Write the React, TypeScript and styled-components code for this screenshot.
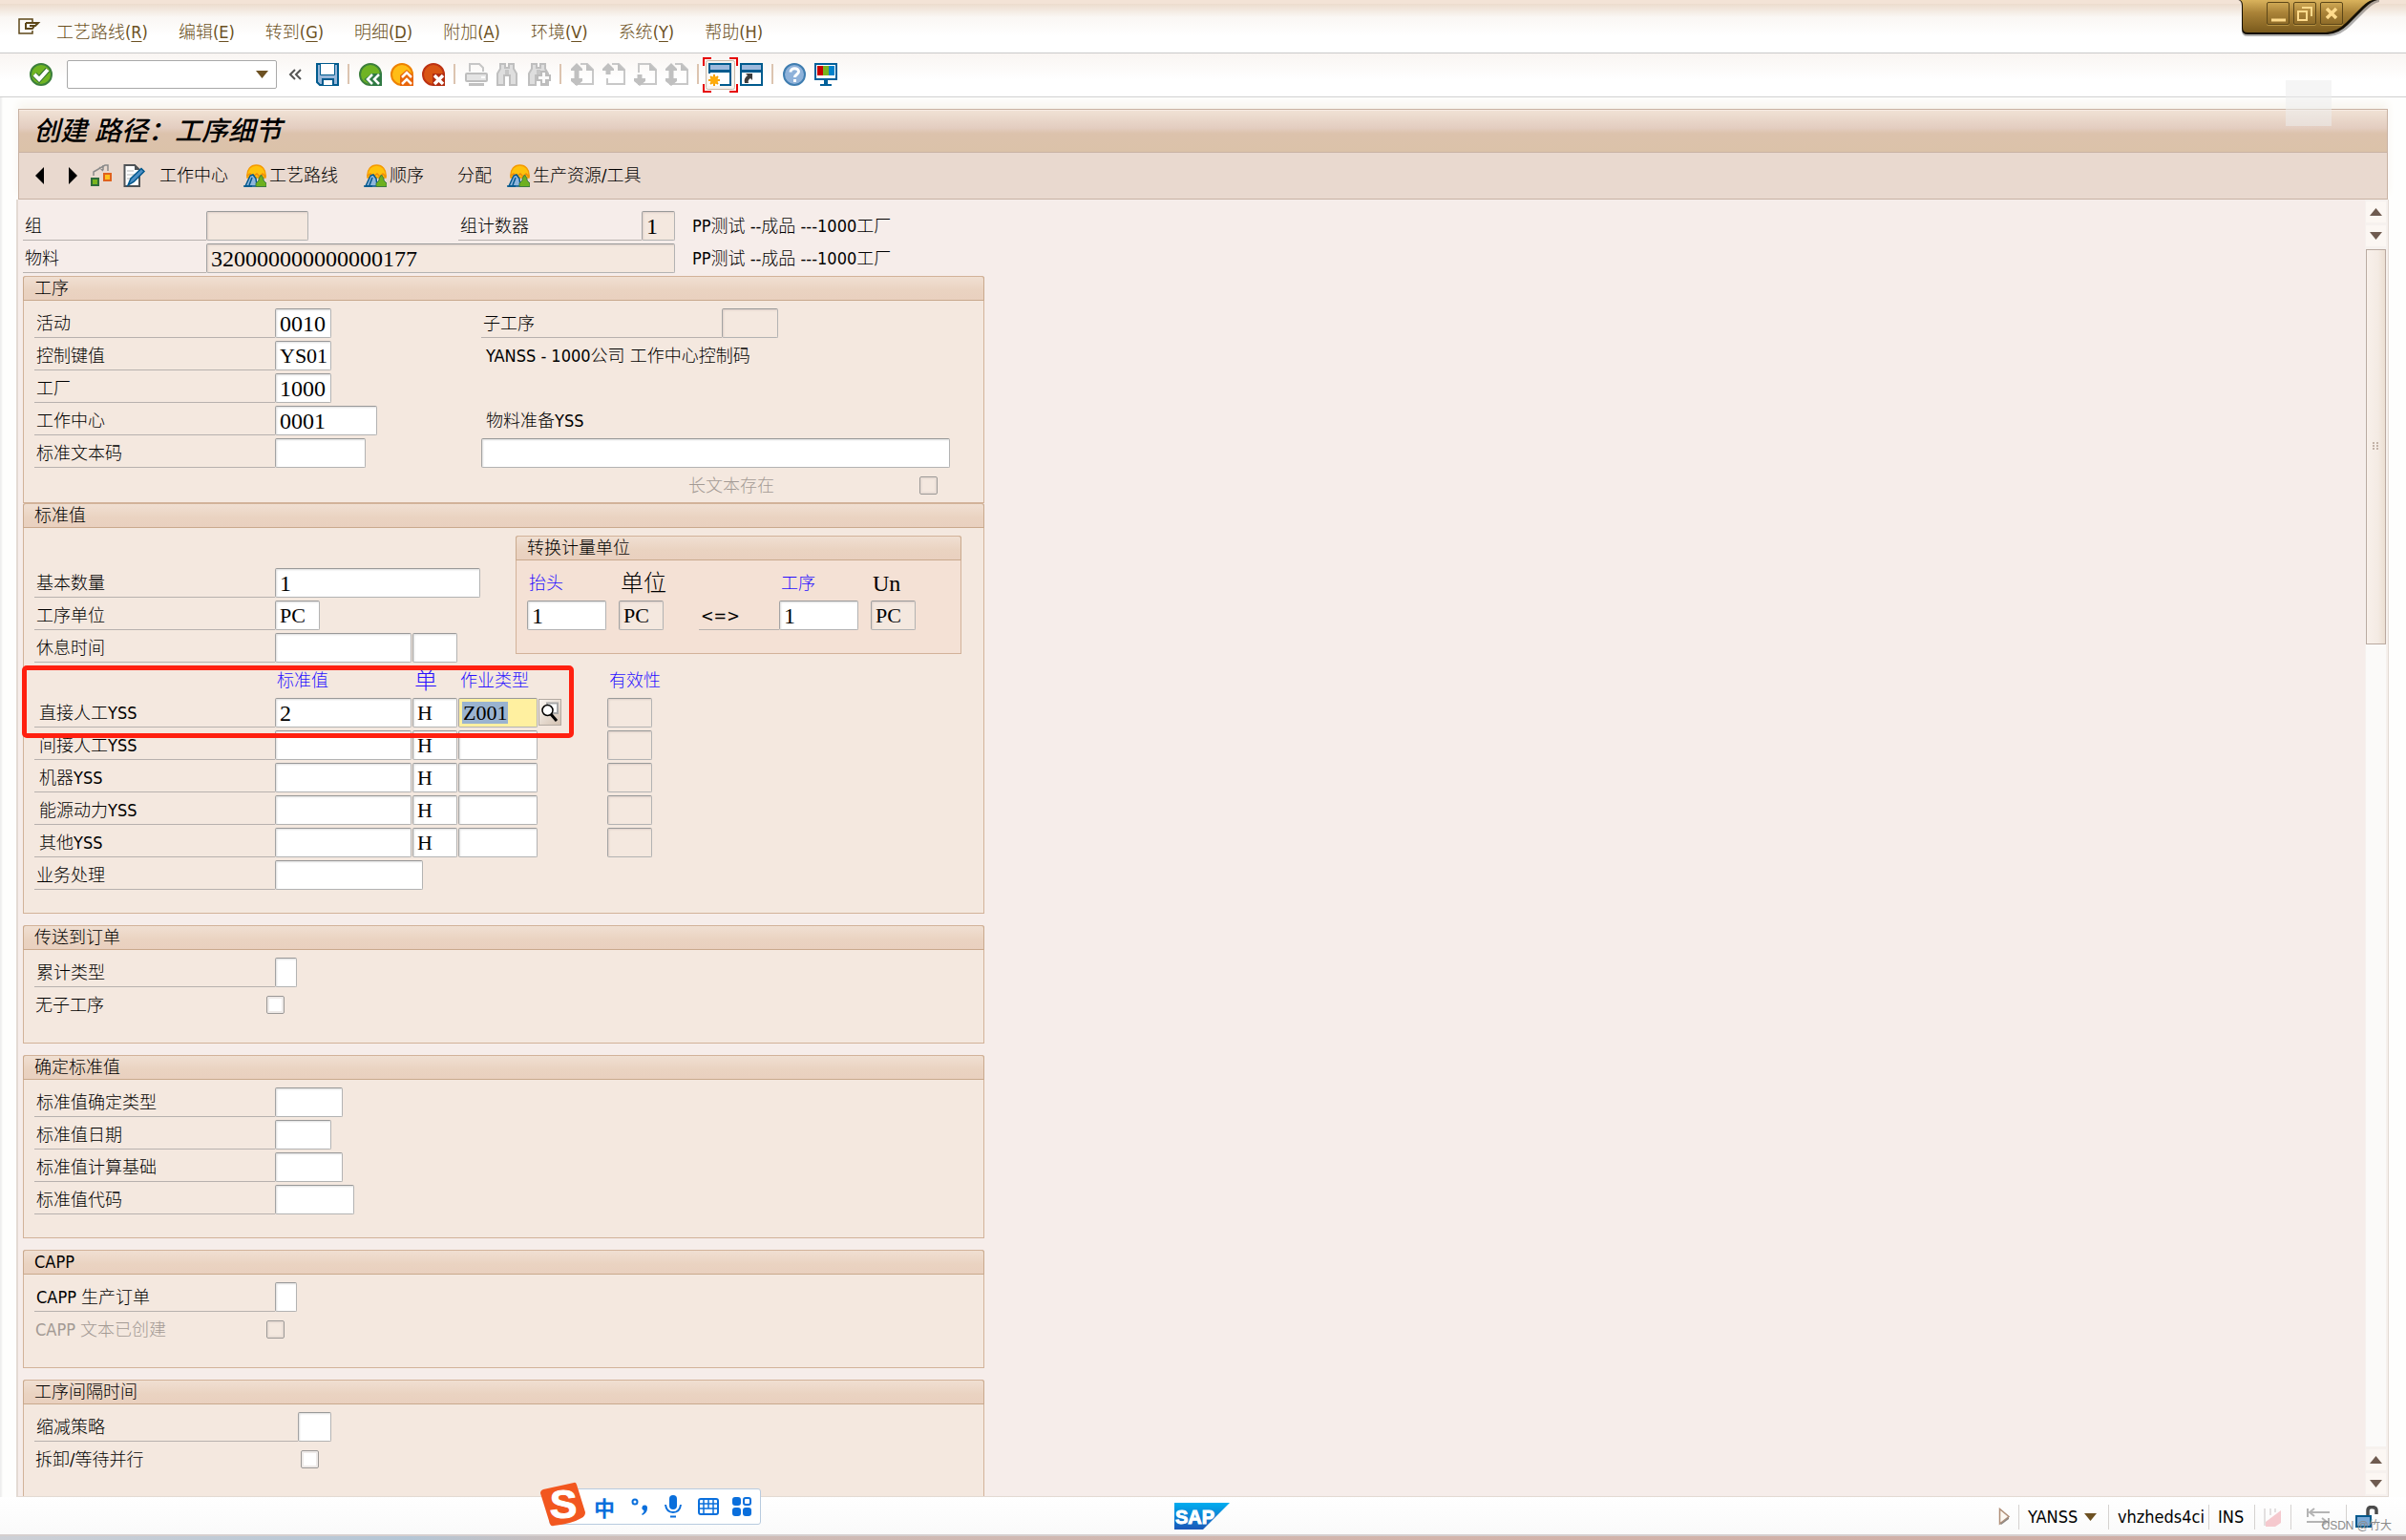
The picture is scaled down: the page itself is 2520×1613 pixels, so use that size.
import React from 'react';
import styled, { createGlobalStyle, css } from 'styled-components';

const UI = `"DejaVu Sans Condensed", "DejaVu Sans", "Noto Sans CJK SC", sans-serif`;
const MONO = `"Liberation Serif", "Noto Sans CJK SC", serif`;
const CELL = 12;
const LINE = 34;

const GlobalStyle = createGlobalStyle`
  *, *::before, *::after { box-sizing: border-box; }
  body { margin: 0; background: #fefefd; font: 300 18px/24px ${UI}; color: #000; }
  button, input, select { font: inherit; color: inherit; margin: 0; }
  button { background: none; border: 0; padding: 0; }
`;

/* ---------- frame ---------- */

const Window = styled.div`
  position: relative;
  display: flex;
  flex-direction: column;
  height: 100vh;
  overflow: hidden;
  box-shadow: inset 2px 0 2px #eeeeee;
`;

const MenuBar = styled.nav`
  display: flex;
  align-items: center;
  height: 56px;
  padding: 8px 19px 0;
  border-top: 4px solid #f3e3d6;
  border-bottom: 1px solid #c9c9c9;
  background: linear-gradient(#ecdccd, #faf7f4 14px, #fff 34px);
`;

const MenuGlyph = styled.button`
  display: flex;
  width: 40px;
  padding-bottom: 12px;
`;

const MenuItems = styled.div`
  display: flex;
  gap: 32px;
`;

const MenuItem = styled.button`
  color: #6b5022;
  white-space: nowrap;
  u { text-underline-offset: 3px; }
`;

const Toolbar = styled.div`
  display: flex;
  align-items: center;
  gap: 9px;
  height: 46px;
  padding: 0 0 2px 31px;
  border-bottom: 1px solid #cfcfcf;
  background: linear-gradient(#f9f5f2, #fff 28px);
`;

const IconButton = styled.button`
  display: flex;
  width: 24px;
  height: 24px;
`;

const Separator = styled.span`
  width: 3px;
  height: 21px;
  border-left: 2px solid #dcc4b0;
`;

const Command = styled.div`
  position: relative;
  width: 220px;
  height: 30px;
  margin: 0 3px 0 6px;
`;

const CommandInput = styled.input`
  width: 100%;
  height: 100%;
  padding: 0 28px 0 5px;
  border: 1px solid #a9a9a9;
  border-radius: 2px;
  background: #fff;
`;

const CommandArrow = styled.button`
  position: absolute;
  right: 9px;
  top: 11px;
  display: flex;
`;

const Collapse = styled.button`
  display: flex;
  width: 20px;
`;

const Framed = styled.span`
  position: relative;
  display: flex;
  width: 24px;
  height: 24px;
  button { position: relative; }
`;

const FocusMarks = styled.svg`
  position: absolute;
  left: -6px;
  top: -6px;
`;

const Panel = styled.header`
  margin: 12px 19px 0;
  border: 1px solid #c8b2a3;
  box-shadow: 0 -6px 8px #f8f5ef;
`;

const Title = styled.h1`
  display: flex;
  align-items: center;
  height: 44px;
  margin: 0;
  padding-left: 15px;
  border-top: 1px solid #f7ebe2;
  background: linear-gradient(#f0e1d4, #e3cdc0 18px, #dcc2ac 24px, #dbc2a9);
  font: italic 500 28px/36px ${UI};
`;

const AppBar = styled.div`
  display: flex;
  align-items: center;
  height: 49px;
  padding-left: 4px;
  border-top: 1px solid #c8b2a3;
  background: #e9d9cf;
`;

const NavButton = styled.button<{ $start?: boolean }>`
  display: flex;
  justify-content: ${(p) => (p.$start ? 'flex-start' : 'center')};
  width: 35px;
`;

const AppActions = styled.div`
  display: flex;
  gap: 16px;
  padding-left: 3px;
`;

const AppButton = styled.button<{ $w?: number }>`
  display: flex;
  align-items: center;
  gap: 3px;
  min-width: ${(p) => p.$w ?? 0}px;
  white-space: nowrap;
`;

const Content = styled.main`
  display: flex;
  flex: 1;
  min-height: 0;
  margin: 0 18px 0 17px;
  border: 1px solid #e3dad3;
  border-top: 0;
  border-left-width: 2px;
  background: #f6edea;
`;

const Screen = styled.form`
  position: relative;
  flex: 1;
  min-width: 0;
  overflow: hidden;
  padding: 12px 0 0 5px;
`;

/* ---------- character-cell form grid ---------- */

interface Place {
  $r: number;
  $c: number;
  $s?: number;
}

const place = css<Place>`
  grid-row: ${(p) => p.$r};
  grid-column: ${(p) => p.$c + 1} / span ${(p) => p.$s ?? 1};
`;

const grid = css`
  display: grid;
  grid-auto-columns: ${CELL}px;
  grid-auto-rows: ${LINE}px;
  align-items: start;
`;

const Head = styled.div`
  ${grid}
`;

const Group = styled.section<{ $flush?: boolean }>`
  ${grid}
  grid-template-columns: repeat(84, ${CELL}px);
  width: ${84 * CELL - 1}px;
  padding-bottom: ${(p) => (p.$flush ? 0 : 22)}px;
  margin-bottom: ${(p) => (p.$flush ? 0 : 12)}px;
  border-radius: 3px 3px 0 0;
  background: #f4e8df;
  box-shadow: inset 0 0 0 1px #d2b299;
`;

const SubGroup = styled.section`
  ${grid}
  grid-area: 2 / 44 / span 4 / span 39;
  grid-template-columns: repeat(39, ${CELL}px);
  width: ${39 * CELL - 1}px;
  padding-bottom: 22px;
  border-radius: 3px 3px 0 0;
  background: #f4e1d5;
  box-shadow: inset 0 0 0 1px #d2b299;
`;

const GroupTitle = styled.h2`
  grid-row: 1;
  grid-column: 1 / -1;
  height: 26px;
  margin: 0 1px 0 0;
  padding-left: 11px;
  border: 1px solid #c9a98d;
  border-top-color: #d2b299;
  border-radius: 3px 3px 0 0;
  background: linear-gradient(#f0dfd2, #ead3c1 14px, #e9d0bf);
  font: 300 18px/24px ${UI};
`;

const Label = styled.label<Place & { $pad?: number }>`
  ${place}
  height: 31px;
  padding-left: ${(p) => p.$pad ?? 2}px;
  border-bottom: 1px solid #b7b1ae;
  line-height: 32px;
  white-space: nowrap;
`;

const Text = styled.span<Place & { $tone?: 'blue' | 'dim'; $pad?: number; $big?: boolean }>`
  ${place}
  height: 31px;
  padding-left: ${(p) => p.$pad ?? 2}px;
  color: ${(p) => (p.$tone === 'blue' ? '#2a12ff' : p.$tone === 'dim' ? '#a39a94' : '#000')};
  line-height: 32px;
  white-space: nowrap;
  ${(p) => p.$big && css`font: 300 24px/32px ${MONO};`}
`;

const Field = styled.input<Place & { $code?: boolean; $focus?: boolean }>`
  ${place}
  height: 31px;
  min-width: 0;
  width: ${(p) => (p.$s ?? 1) * CELL - 1}px;
  padding: 1px 0 0 4px;
  border: 1px solid #b3b3b3;
  border-top-color: #999;
  border-left-color: #a3a3a3;
  border-radius: 2px;
  background: #fff;
  box-shadow: inset 1px 1px 2px #dedede;
  font: ${(p) => (p.$code ? '22px/26px' : '24px/26px')} ${MONO};
  &:read-only { background: #f4e8df; box-shadow: inset 1px 1px 2px #dccfc8; }
  ${(p) =>
    p.$focus &&
    css`
      background: linear-gradient(#9ab3d0, #9ab3d0) 3px 3px / 48px 23px no-repeat, #fff0a0;
      box-shadow: none;
    `}
`;

const Check = styled.input.attrs({ type: 'checkbox' })<Place>`
  ${place}
  appearance: none;
  width: 19px;
  height: 19px;
  margin: 6px 0 0 3px;
  border: 1px solid #9b9896;
  border-radius: 2px;
  background: #fff;
  box-shadow: inset 0 0 0 2px #eeeae8;
  &:disabled { background: #f4e8df; box-shadow: inset 0 0 0 2px #eaded6; }
`;

const CheckLabel = styled.label<Place & { $dim?: boolean }>`
  ${place}
  padding-left: 1px;
  color: ${(p) => (p.$dim ? '#a39a94' : '#000')};
  line-height: 32px;
  white-space: nowrap;
`;

const SearchHelp = styled.button<Place>`
  ${place}
  display: flex;
  align-items: center;
  justify-content: center;
  width: 24px;
  height: 28px;
  margin-top: 1px;
  border: 1px solid #b3aaa2;
  background: linear-gradient(135deg, #fbf7f3, #d3c1b1);
`;

const Marker = styled.div`
  position: absolute;
  left: 4px;
  top: 488px;
  width: 578px;
  height: 76px;
  border: 5px solid #ff2010;
  border-radius: 5px;
  pointer-events: none;
`;

/* ---------- scroll bar ---------- */

const ScrollBar = styled.div`
  display: flex;
  flex-direction: column;
  gap: 3px;
  width: 24px;
  padding: 2px 2px 2px 1px;
  background: #f6f1ee;
`;

const ScrollButton = styled.button`
  display: flex;
  flex: none;
  align-items: center;
  justify-content: center;
  height: 22px;
  background: #fcf7f3;
`;

const Track = styled.div`
  flex: 1;
  background: #fbfaf9;
`;

const Thumb = styled.div`
  display: flex;
  align-items: center;
  justify-content: center;
  height: 33%;
  border: 1px solid #b9a9a0;
  background: linear-gradient(90deg, #f8f0ea, #f4ebe4 60%, #ecdfd2);
`;

/* ---------- status bar ---------- */

const StatusBar = styled.footer`
  display: flex;
  align-items: center;
  justify-content: flex-end;
  height: 39px;
  padding: 2px 29px 0 0;
  background: linear-gradient(#fff, #fafafa);
`;

const StatusItem = styled.div<{ $w: number }>`
  display: flex;
  align-items: center;
  gap: 7px;
  width: ${(p) => p.$w}px;
  height: 26px;
  padding-left: 9px;
  border-left: 1px solid #d5d2d0;
  white-space: nowrap;
`;

const StatusPlain = styled.button`
  display: flex;
  width: 21px;
`;

const StatusEnd = styled(StatusItem)`
  padding-left: 16px;
`;

const Brand = styled.svg`
  position: absolute;
  left: 1230px;
  bottom: 11px;
`;

const BottomEdge = styled.div`
  height: 6px;
  background: linear-gradient(90deg, #cdd0d6, #b4c6d6 17%, #cdbdb9 24%, #d3b4ab 60%, #cfaea6 90%, #b9a4a6);
  border-top: 2px solid #d5cfcf;
`;

const Watermark = styled.span`
  position: absolute;
  right: 15px;
  bottom: 6px;
  color: #8b8b8b;
  font: 12px/18px "Liberation Sans", "Noto Sans CJK SC", sans-serif;
`;

/* ---------- floating pieces ---------- */

const WindowControls = styled.div`
  position: absolute;
  top: 0;
  right: 20px;
  width: 160px;
  height: 44px;
  svg { display: block; }
`;

const ControlButtons = styled.div`
  position: absolute;
  left: 34px;
  top: 2px;
  display: flex;
  gap: 4px;
`;

const ControlButton = styled.button`
  width: 24px;
  height: 24px;
  border: 1px solid #5d4718;
  border-radius: 2px;
  box-shadow: 0 1px 0 #b99444;
`;

const Ghost = styled.div`
  position: absolute;
  top: 84px;
  right: 78px;
  width: 48px;
  height: 48px;
  background: rgba(236, 236, 236, 0.55);
`;

const Ime = styled.div`
  position: absolute;
  left: 575px;
  bottom: 16px;
  display: flex;
  align-items: center;
  gap: 14px;
  width: 222px;
  height: 38px;
  padding-left: 45px;
  border: 1px solid #b8cbdf;
  border-radius: 3px;
  background: #fff;
  color: #0a6fdc;
`;

const ImeLogo = styled.svg`
  position: absolute;
  left: -11px;
  top: -8px;
`;

const ImeMode = styled.button`
  width: 24px;
  color: #0a6fdc;
  font: 700 22px/24px "Noto Sans CJK SC", sans-serif;
`;

const ImeButton = styled.button`
  display: flex;
  width: 22px;
`;

/* ---------- icons ---------- */

const Svg = ({ children, w = 24, h = 24 }: { children: React.ReactNode; w?: number; h?: number }) => (
  <svg width={w} height={h} viewBox={`0 0 ${w} ${h}`} fill="none" aria-hidden="true">
    {children}
  </svg>
);

const Triangle = ({ up = false, color = '#6f5b50', w = 13 }: { up?: boolean; color?: string; w?: number }) => (
  <Svg w={w} h={8}>
    <path d={up ? `M0 8L${w / 2} 0L${w} 8Z` : `M0 0H${w}L${w / 2} 8Z`} fill={color} />
  </Svg>
);

const OkIcon = () => (
  <Svg>
    <circle cx="12" cy="12" r="11" fill="#6fb423" stroke="#3c7f3c" strokeWidth="2" />
    <path d="M5 12l5 5l9 -10" stroke="#2f6b2f" strokeWidth="6" />
    <path d="M5 12l5 5l9 -10" stroke="#fff" strokeWidth="4" />
  </Svg>
);
const SaveIcon = () => (
  <Svg>
    <path d="M1 1H23V23H4L1 20Z" fill="#97b7d9" stroke="#005b8e" strokeWidth="2" />
    <path d="M4.500 1V12.500H19.500V1" fill="#fff" stroke="#005b8e" />
    <path d="M7 23V17H18V23" fill="#fff" stroke="#005b8e" strokeWidth="2" />
  </Svg>
);
const BackIcon = () => (
  <Svg>
    <circle cx="12" cy="12" r="11" fill="#6fb423" stroke="#3c7f3c" strokeWidth="2" />
    <path d="M13 11l-7.500 6l7.500 7h11v-13z" fill="#2f7a43" />
    <path d="M14 12l-5 5l5 5M21 12l-5 5l5 5" stroke="#fff" strokeWidth="2.500" />
  </Svg>
);
const ExitIcon = () => (
  <Svg>
    <circle cx="12" cy="12" r="11" fill="#ffbd16" stroke="#ee8200" strokeWidth="2" />
    <path d="M10 13l7 -6l7 6v11h-14z" fill="#e8650a" />
    <path d="M12 15l5 -5l5 5M12 22l5 -5l5 5" stroke="#fff" strokeWidth="2.500" />
  </Svg>
);
const CancelIcon = () => (
  <Svg>
    <circle cx="12" cy="12" r="11" fill="#d95514" stroke="#bd3212" strokeWidth="2" />
    <path d="M11 11h13v13h-13z" fill="#b12d10" />
    <path d="M13 13l9 9M22 13l-9 9" stroke="#fff" strokeWidth="3.500" />
  </Svg>
);
const PrintIcon = () => (
  <Svg>
    <path d="M5 9V1H15L19 5V9" stroke="#c6c6c6" strokeWidth="2" />
    <rect x="1" y="11" width="22" height="8" rx="1" fill="#e4e4e4" stroke="#bebebe" strokeWidth="2" />
    <path d="M17 14h4v2h-4z" fill="#fff" />
    <path d="M4 22.500H20" stroke="#c0c0c0" strokeWidth="3" />
  </Svg>
);
const Binoculars = () => (
  <>
    <path d="M4 1h5v4h4v-4h5v5l3 5v12h-7v-10h-6v10h-7v-12l3 -5z" fill="#dedede" stroke="#bfbfbf" strokeWidth="2" />
    <path d="M9 7h4v5h-4z" fill="#c6c6c6" />
  </>
);
const FindIcon = () => (
  <Svg>
    <Binoculars />
  </Svg>
);
const FindNextIcon = () => (
  <Svg>
    <Binoculars />
    <path d="M14 9h5v4h4v5h-4v4h-5v-4h-4v-5h4z" fill="#fafafa" stroke="#bcbcbc" strokeWidth="2" />
  </Svg>
);
const PageIcon = ({ up, down, low }: { up?: boolean; down?: boolean; low?: boolean }) => (
  <Svg>
    <path d="M10 1H17L23 7V22H5V16" stroke="#c8c8c8" strokeWidth="2" />
    <path d="M16 0L24 8H16Z" fill="#c0c0c0" />
    {up && <path d="M6 0l6 6v2h-3.500v4h-5v-4h-3.500v-2z" fill="#c0c0c0" />}
    {down && <path d="M6 24l6 -5v-3h-3.500v-4h-5v4h-3.500v3z" fill="#c0c0c0" />}
    {low && <path d="M10 1H5V10" stroke="#c8c8c8" strokeWidth="2" />}
  </Svg>
);
const SessionIcon = ({ link }: { link?: boolean }) => (
  <Svg>
    <path d="M1 1H23V23H1Z" fill="#fff" stroke="#005b8e" strokeWidth="2" />
    <path d="M2 2H22V7H2Z" fill="#9db9dc" />
    <path d="M1 8.500H23" stroke="#005b8e" strokeWidth="3" />
    {link ? (
      <path d="M6 11h7v7l-2 -2c-2 1 -3 3 -2 5h-4c-1 -3 0 -6 3 -8z" fill="#3c3c3c" />
    ) : (
      <>
        <path d="M0 11h12v13h-12z" fill="#fff" />
        <path d="M6 12v12M0 18h12M2 14l8 8M10 14l-8 8" stroke="#f5a000" strokeWidth="2" />
        <circle cx="6" cy="18" r="4" fill="#ffab08" />
      </>
    )}
  </Svg>
);
const HelpIcon = () => (
  <Svg>
    <circle cx="12" cy="12" r="11" fill="#8fb2da" stroke="#3f7db0" strokeWidth="2" />
    <path d="M8 9.500c0 -5 8.500 -5 8.500 -.5c0 3 -4 3 -4 6" stroke="#fff" strokeWidth="3" />
    <path d="M11 17h3v3h-3z" fill="#fff" />
  </Svg>
);
const LayoutIcon = () => (
  <Svg>
    <rect x="1" y="1" width="22" height="16" fill="#fff" stroke="#00609a" strokeWidth="2" />
    <path d="M3 3h6v10h-6z" fill="#c80000" />
    <path d="M9 3h6v10h-6z" fill="#78b41e" />
    <path d="M15 3h6v10h-6z" fill="#0082cc" />
    <path d="M10 18h4v4h-4zM6 22h12v2h-12z" fill="#00609a" />
  </Svg>
);
const AreaIcon = () => (
  <Svg>
    <path d="M4 14C3 5 8 1 13.500 1S24 5 23 14Z" fill="#ffc20c" stroke="#f59a00" strokeWidth="1.500" />
    <path d="M4 12l3 -2l3 3l4 -3l3 3l3 -3l3 3" stroke="#ee8a0c" strokeWidth="1.500" />
    <path d="M2 23L7 12L10 11L13 15L14 23Z" fill="#8fb6dc" stroke="#00578c" strokeWidth="1.500" />
    <path d="M6 22L9 14M0 23H9" stroke="#00578c" strokeWidth="1.500" />
    <path d="M13 23.500V20L16 17V15L18.500 11L21 15V17L24 20V23.500Z" fill="#6db01f" stroke="#3b7a45" />
  </Svg>
);
const SequenceIcon = () => (
  <Svg>
    <path d="M4 12V8L16 1H19V7M14 1v5M10 3l4 4" stroke="#8a8a8a" strokeWidth="1.500" />
    <rect x="2" y="15" width="7" height="7" fill="#79b51f" stroke="#2f6b3a" strokeWidth="2" />
    <rect x="15" y="10" width="7" height="7" fill="#ffc01e" stroke="#e0621c" strokeWidth="2" />
  </Svg>
);
const EditTextIcon = () => (
  <Svg>
    <path d="M1.500 1H12L17 6V23H1.500Z" fill="#fff" stroke="#4f5356" strokeWidth="2" />
    <path d="M12 0L18 6H12Z" fill="#4f5356" />
    <path d="M4 7h7M4 11h8M4 15h5" stroke="#b5b5b5" />
    <path d="M5 22L8 15L19 4.500L22 7.500L11 18.500Z" fill="#4d8fc4" stroke="#00578c" strokeWidth="1.500" />
  </Svg>
);
const SearchIcon = () => (
  <Svg w={18} h={22}>
    <path d="M6 1.500H17V12H6Z" fill="#fff" stroke="#a8a8a8" strokeWidth="2" />
    <circle cx="6.500" cy="9" r="5.500" fill="#fff" stroke="#000" strokeWidth="1.500" />
    <path d="M10 13L16 20" stroke="#000" strokeWidth="3" />
  </Svg>
);

/* ---------- data ---------- */

const menus: [string, string][] = [
  ['工艺路线', 'R'],
  ['编辑', 'E'],
  ['转到', 'G'],
  ['明细', 'D'],
  ['附加', 'A'],
  ['环境', 'V'],
  ['系统', 'Y'],
  ['帮助', 'H'],
];

const standardValues = ['直接人工YSS', '间接人工YSS', '机器YSS', '能源动力YSS', '其他YSS'];

interface LineProps {
  id: string;
  label: string;
  row: number;
  span: number;
  at?: number;
  value?: string;
  code?: boolean;
}

const FormLine = ({ id, label, row, span, at = 22, value = '', code }: LineProps) => (
  <>
    <Label htmlFor={id} $r={row} $c={1} $s={at - 1}>
      {label}
    </Label>
    <Field id={id} $r={row} $c={at} $s={span} $code={code} defaultValue={value} />
  </>
);

const App = () => (
  <>
    <GlobalStyle />
    <Window>
      <MenuBar>
        <MenuGlyph aria-label="菜单">
          <Svg w={24} h={18}>
            <path d="M15 4V1H1V16H15V13" stroke="#5d4718" strokeWidth="1.500" />
            <path d="M8 5H21L18 8H15M8 5V11H15L17 8H12" stroke="#5d4718" strokeWidth="2" />
          </Svg>
        </MenuGlyph>
        <MenuItems>
          {menus.map(([name, key]) => (
            <MenuItem key={key}>
              {name}(<u>{key}</u>)
            </MenuItem>
          ))}
        </MenuItems>
      </MenuBar>

      <Toolbar>
        <IconButton aria-label="回车"><OkIcon /></IconButton>
        <Command>
          <CommandInput aria-label="命令" />
          <CommandArrow aria-label="历史"><Triangle color="#6d5122" /></CommandArrow>
        </Command>
        <Collapse aria-label="收起">
          <Svg w={16} h={14}>
            <path d="M7 2L2 7L7 12M13 2L8 7L13 12" stroke="#555" strokeWidth="2" />
          </Svg>
        </Collapse>
        <IconButton aria-label="保存"><SaveIcon /></IconButton>
        <Separator />
        <IconButton aria-label="返回"><BackIcon /></IconButton>
        <IconButton aria-label="退出"><ExitIcon /></IconButton>
        <IconButton aria-label="取消"><CancelIcon /></IconButton>
        <Separator />
        <IconButton aria-label="打印"><PrintIcon /></IconButton>
        <IconButton aria-label="查找"><FindIcon /></IconButton>
        <IconButton aria-label="查找下一个"><FindNextIcon /></IconButton>
        <Separator />
        <IconButton aria-label="首页"><PageIcon up down /></IconButton>
        <IconButton aria-label="上一页"><PageIcon up /></IconButton>
        <IconButton aria-label="下一页"><PageIcon down low /></IconButton>
        <IconButton aria-label="末页"><PageIcon up down /></IconButton>
        <Separator />
        <Framed>
          <FocusMarks width="37" height="37" viewBox="0 0 37 37" fill="none" aria-hidden="true">
            <rect x="3.500" y="3.500" width="30" height="30" rx="2" fill="#f8f3ee" stroke="#c9b8a8" />
            <path d="M9 1H1V9M28 1H36V9M1 28V36H9M36 28V36H28" stroke="#e60000" strokeWidth="2" />
          </FocusMarks>
          <IconButton aria-label="新建会话"><SessionIcon /></IconButton>
        </Framed>
        <IconButton aria-label="快捷方式"><SessionIcon link /></IconButton>
        <Separator />
        <IconButton aria-label="帮助"><HelpIcon /></IconButton>
        <IconButton aria-label="布局"><LayoutIcon /></IconButton>
      </Toolbar>

      <Panel>
        <Title>创建 路径：工序细节</Title>
        <AppBar>
          <NavButton aria-label="上一个">
            <Svg w={9} h={18}><path d="M9 0V18L0 9Z" fill="#000" /></Svg>
          </NavButton>
          <NavButton aria-label="下一个">
            <Svg w={9} h={18}><path d="M0 0V18L9 9Z" fill="#000" /></Svg>
          </NavButton>
          <NavButton $start aria-label="工序"><SequenceIcon /></NavButton>
          <NavButton $start aria-label="长文本"><EditTextIcon /></NavButton>
          <AppActions>
            <AppButton>工作中心</AppButton>
            <AppButton $w={110}><AreaIcon />工艺路线</AppButton>
            <AppButton $w={82}><AreaIcon />顺序</AppButton>
            <AppButton>分配</AppButton>
            <AppButton><AreaIcon />生产资源/工具</AppButton>
          </AppActions>
        </AppBar>
      </Panel>

      <Content>
        <Screen onSubmit={(e) => e.preventDefault()}>
          <Head>
            <Label htmlFor="group" $r={1} $c={0} $s={16}>组</Label>
            <Field id="group" $r={1} $c={16} $s={9} readOnly />
            <Label htmlFor="counter" $r={1} $c={38} $s={16}>组计数器</Label>
            <Field id="counter" $r={1} $c={54} $s={3} defaultValue="1" readOnly />
            <Text $r={1} $c={58} $s={20} $pad={5}>PP测试 --成品 ---1000工厂</Text>
            <Label htmlFor="material" $r={2} $c={0} $s={16}>物料</Label>
            <Field id="material" $r={2} $c={16} $s={41} defaultValue="320000000000000177" readOnly />
            <Text $r={2} $c={58} $s={20} $pad={5}>PP测试 --成品 ---1000工厂</Text>
          </Head>

          <Group $flush>
            <GroupTitle>工序</GroupTitle>
            <FormLine id="activity" label="活动" row={2} span={5} value="0010" />
            <Label htmlFor="suboperation" $r={2} $c={40} $s={21}>子工序</Label>
            <Field id="suboperation" $r={2} $c={61} $s={5} readOnly />
            <FormLine id="control" label="控制键值" row={3} span={5} value="YS01" code />
            <Text $r={3} $c={40} $s={30} $pad={5}>YANSS - 1000公司 工作中心控制码</Text>
            <FormLine id="plant" label="工厂" row={4} span={5} value="1000" />
            <FormLine id="workcenter" label="工作中心" row={5} span={9} value="0001" />
            <Text $r={5} $c={40} $s={30} $pad={5}>物料准备YSS</Text>
            <FormLine id="textkey" label="标准文本码" row={6} span={8} />
            <Field aria-label="描述" $r={6} $c={40} $s={41} />
            <CheckLabel htmlFor="longtext" $r={7} $c={58} $s={10} $dim>长文本存在</CheckLabel>
            <Check id="longtext" $r={7} $c={78} $s={2} disabled />
          </Group>

          <Group>
            <GroupTitle>标准值</GroupTitle>
            <SubGroup>
              <GroupTitle>转换计量单位</GroupTitle>
              <Text $r={2} $c={1} $s={7} $tone="blue">抬头</Text>
              <Text $r={2} $c={9} $s={5} $big>单位</Text>
              <Text $r={2} $c={23} $s={7} $tone="blue">工序</Text>
              <Text $r={2} $c={31} $s={4} $big>Un</Text>
              <Field aria-label="抬头" $r={3} $c={1} $s={7} defaultValue="1" />
              <Field aria-label="单位" $r={3} $c={9} $s={4} $code defaultValue="PC" readOnly />
              <Label htmlFor="ratio" $r={3} $c={16} $s={7}>&lt;=&gt;</Label>
              <Field id="ratio" $r={3} $c={23} $s={7} defaultValue="1" />
              <Field aria-label="Un" $r={3} $c={31} $s={4} $code defaultValue="PC" readOnly />
            </SubGroup>
            <FormLine id="base" label="基本数量" row={3} span={18} value="1" />
            <FormLine id="unit" label="工序单位" row={4} span={4} value="PC" code />
            <FormLine id="break" label="休息时间" row={5} span={12} />
            <Field aria-label="休息时间单位" $r={5} $c={34} $s={4} />
            <Text $r={6} $c={22} $s={8} $tone="blue">标准值</Text>
            <Text $r={6} $c={34} $s={3} $tone="blue" $big>单</Text>
            <Text $r={6} $c={38} $s={8} $tone="blue">作业类型</Text>
            <Text $r={6} $c={51} $s={6} $tone="blue">有效性</Text>
            {standardValues.map((name, i) => (
              <React.Fragment key={name}>
                <Label htmlFor={`std${i}`} $r={7 + i} $c={1} $s={21} $pad={5}>{name}</Label>
                <Field id={`std${i}`} $r={7 + i} $c={22} $s={12} defaultValue={i === 0 ? '2' : ''} />
                <Field aria-label={`${name} 单位`} $r={7 + i} $c={34} $s={4} $code defaultValue="H" />
                <Field
                  aria-label={`${name} 作业类型`}
                  $r={7 + i}
                  $c={38}
                  $s={7}
                  $code
                  $focus={i === 0}
                  defaultValue={i === 0 ? 'Z001' : ''}
                />
                {i === 0 && (
                  <SearchHelp type="button" aria-label="搜索帮助" $r={7} $c={45} $s={2}>
                    <SearchIcon />
                  </SearchHelp>
                )}
                <Field aria-label={`${name} 有效性`} $r={7 + i} $c={51} $s={4} readOnly />
              </React.Fragment>
            ))}
            <FormLine id="process" label="业务处理" row={12} span={13} />
          </Group>

          <Group>
            <GroupTitle>传送到订单</GroupTitle>
            <FormLine id="cumulation" label="累计类型" row={2} span={2} />
            <CheckLabel htmlFor="nosub" $r={3} $c={1} $s={20}>无子工序</CheckLabel>
            <Check id="nosub" $r={3} $c={21} $s={2} />
          </Group>

          <Group>
            <GroupTitle>确定标准值</GroupTitle>
            <FormLine id="dettype" label="标准值确定类型" row={2} span={6} />
            <FormLine id="detdate" label="标准值日期" row={3} span={5} />
            <FormLine id="detbase" label="标准值计算基础" row={4} span={6} />
            <FormLine id="detcode" label="标准值代码" row={5} span={7} />
          </Group>

          <Group>
            <GroupTitle>CAPP</GroupTitle>
            <FormLine id="capp" label="CAPP 生产订单" row={2} span={2} />
            <CheckLabel htmlFor="capptext" $r={3} $c={1} $s={20} $dim>CAPP 文本已创建</CheckLabel>
            <Check id="capptext" $r={3} $c={21} $s={2} disabled />
          </Group>

          <Group>
            <GroupTitle>工序间隔时间</GroupTitle>
            <FormLine id="reduction" label="缩减策略" row={2} span={3} at={24} />
            <CheckLabel htmlFor="teardown" $r={3} $c={1} $s={20}>拆卸/等待并行</CheckLabel>
            <Check id="teardown" $r={3} $c={24} $s={2} />
          </Group>

          <Marker />
        </Screen>

        <ScrollBar>
          <ScrollButton aria-label="上"><Triangle up /></ScrollButton>
          <ScrollButton aria-label="下"><Triangle /></ScrollButton>
          <Track>
            <Thumb>
              <Svg w={7} h={9}>
                <path d="M0 1h2M4 1h2M0 4h2M4 4h2M0 7h2M4 7h2" stroke="#c3b3a8" strokeWidth="2" />
              </Svg>
            </Thumb>
          </Track>
          <ScrollButton aria-label="上"><Triangle up /></ScrollButton>
          <ScrollButton aria-label="下"><Triangle /></ScrollButton>
        </ScrollBar>
      </Content>

      <StatusBar>
        <StatusPlain aria-label="消息">
          <Svg w={13} h={19}>
            <path d="M1.500 1.500V17L11 9.500Z" fill="#fdf8f2" stroke="#b08f78" strokeWidth="1.500" />
            <path d="M2 17L11 10V12L3 18Z" fill="#8c8580" />
          </Svg>
        </StatusPlain>
        <StatusItem $w={94}>YANSS <Triangle color="#6d5122" /></StatusItem>
        <StatusItem $w={105}>vhzheds4ci</StatusItem>
        <StatusItem $w={48}>INS</StatusItem>
        <StatusItem $w={38}>
          <Svg w={18} h={20}>
            <path d="M1 1V19M7 1V8M12 1V5" stroke="#e3e0e0" strokeWidth="2" />
            <path d="M2 20V15L18 3V16L12 20Z" fill="#f5c9ce" />
          </Svg>
        </StatusItem>
        <StatusEnd $w={58}>
          <Svg w={25} h={20}>
            <path d="M1 1V10M3 5H24M8 1L3 5L8 9M23 11V20M0 15H21M16 11L21 15L16 19" stroke="#b4b4b4" strokeWidth="2" />
          </Svg>
        </StatusEnd>
        <StatusItem $w={34}>
          <Svg>
            <path d="M13 10V5Q13 1.500 17 1.500Q22 1.500 22 5V9" stroke="#4c4c4c" strokeWidth="3.500" />
            <path d="M1 11H16V22H1Z" fill="#7ba9d6" stroke="#00588c" strokeWidth="2" />
          </Svg>
        </StatusItem>
        <Brand width="58" height="28" viewBox="0 0 58 28" role="img" aria-label="SAP">
          <defs>
            <linearGradient id="sap" x1="0" y1="0" x2="0" y2="1">
              <stop offset="0" stopColor="#00aef0" />
              <stop offset="1" stopColor="#1b57b8" />
            </linearGradient>
          </defs>
          <path d="M0 0H58L30 28H0Z" fill="url(#sap)" />
          <text x="1" y="22" fill="#fff" stroke="#fff" fontFamily="Liberation Sans" fontWeight="700" fontSize="20">SAP</text>
        </Brand>
        <Watermark>CSDN @竹大</Watermark>
      </StatusBar>
      <BottomEdge />

      <WindowControls>
        <svg width="160" height="44" viewBox="0 0 160 44" aria-hidden="true">
          <defs>
            <linearGradient id="gold" x1="0" y1="0" x2="0" y2="1">
              <stop offset="0" stopColor="#d9b25c" />
              <stop offset="0.400" stopColor="#a98237" />
              <stop offset="1" stopColor="#7a5a1c" />
            </linearGradient>
          </defs>
          <path d="M4 0Q8 1 8 6V32Q8 38 14 38H100Q112 37 122 27L138 11Q146 3 152 2V0Z" fill="#000" opacity="0.300" />
          <path d="M5 0Q8 1 8 6V30Q8 36 14 36H98Q110 35 119 26L136 9Q144 1 150 0Z" fill="#151005" />
          <path d="M6 0Q9 1 9 6V29Q9 34 14 34H96Q108 33 117 24L134 7Q140 1 145 0Z" fill="url(#gold)" />
        </svg>
        <ControlButtons>
          <ControlButton aria-label="最小化">
            <Svg w={22} h={22}><path d="M4 18H19" stroke="#ffdb8c" strokeWidth="3" /></Svg>
          </ControlButton>
          <ControlButton aria-label="还原">
            <Svg w={22} h={22}>
              <path d="M8 5H18V14M4 9H13V18H4Z" stroke="#ffdb8c" strokeWidth="2" />
            </Svg>
          </ControlButton>
          <ControlButton aria-label="关闭">
            <Svg w={22} h={22}><path d="M6 6L16 16M16 6L6 16" stroke="#ffdb8c" strokeWidth="3.500" /></Svg>
          </ControlButton>
        </ControlButtons>
      </WindowControls>
      <Ghost />

      <Ime>
        <ImeLogo width="50" height="48" viewBox="0 0 50 48" role="img" aria-label="S">
          <path d="M4 8L36 1Q38 0 39 3L48 32Q48 36 44 38Q34 44 15 46Q12 47 11 44L1 12Q1 9 4 8Z" fill="#f2571f" />
          <text x="25" y="38" textAnchor="middle" fill="#fff" stroke="#fff" strokeWidth="1" fontFamily="Liberation Sans" fontWeight="700" fontSize="43">S</text>
        </ImeLogo>
        <ImeMode>中</ImeMode>
        <ImeButton aria-label="标点">
          <Svg w={22} h={22}>
            <circle cx="6" cy="6" r="2.500" stroke="#0a6fdc" strokeWidth="2" />
            <path d="M13 19Q16 17 15.500 15A2.800 2.800 0 1 1 19 12.500Q19 17.500 14 20Z" fill="#0a6fdc" />
          </Svg>
        </ImeButton>
        <ImeButton aria-label="语音">
          <Svg w={20} h={24}>
            <rect x="6" y="0" width="8" height="15" rx="4" fill="#0a6fdc" />
            <path d="M2 10Q3 18 10 18Q17 18 18 10M7 22.500H13" stroke="#0a6fdc" strokeWidth="2" />
          </Svg>
        </ImeButton>
        <ImeButton aria-label="键盘">
          <Svg w={22} h={18}>
            <rect x="1" y="1" width="20" height="16" rx="2" stroke="#0a6fdc" strokeWidth="2" />
            <path d="M1 6H21M1 11H21M6 1V17M11 1V11M16 1V17" stroke="#0a6fdc" strokeWidth="1.500" />
          </Svg>
        </ImeButton>
        <ImeButton aria-label="工具">
          <Svg w={20} h={20}>
            <rect x="0" y="0" width="9" height="9" rx="3" fill="#0a6fdc" />
            <rect x="0" y="11" width="9" height="9" rx="3" fill="#0a6fdc" />
            <rect x="11" y="11" width="9" height="9" rx="3" fill="#0a6fdc" />
            <rect x="12" y="1" width="7" height="7" rx="2" stroke="#0a6fdc" strokeWidth="2" />
          </Svg>
        </ImeButton>
      </Ime>
    </Window>
  </>
);

export default App;
